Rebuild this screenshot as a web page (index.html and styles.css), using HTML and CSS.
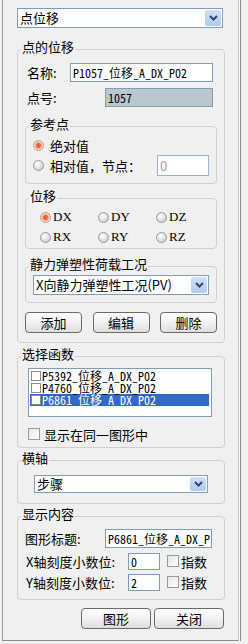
FILE: index.html
```html
<!DOCTYPE html>
<html lang="zh-CN">
<head>
    <meta charset="UTF-8">
    <meta name="viewport" content="width=device-width, initial-scale=1.0">
    <title>点位移</title>
    <link rel="stylesheet" href="styles.css">
</head>
<body>
<div class="panel">
    <div class="combo combo-top">
        <span class="combo-text">点位移</span>
        <span class="combo-btn"><svg width="9" height="6" viewBox="0 0 9 6"><path d="M1 1 L4.5 4.5 L8 1" fill="none" stroke="#33456b" stroke-width="2"/></svg></span>
    </div>

    <fieldset class="group g-point">
        <legend>点的位移</legend>
        <div class="row">
            <label class="lbl lbl-name">名称:</label>
            <div class="edit edit-name mono">P1057_位移_A_DX_P02</div>
        </div>
        <div class="row row-no">
            <label class="lbl lbl-no">点号:</label>
            <div class="edit edit-no mono">1057</div>
        </div>

        <fieldset class="group sub g-ref">
            <legend>参考点</legend>
            <div class="opt opt-1"><span class="radio on"></span><span>绝对值</span></div>
            <div class="opt opt-2"><span class="radio"></span><span>相对值，节点：</span><div class="edit edit-node">0</div></div>
        </fieldset>

        <fieldset class="group sub g-disp">
            <legend>位移</legend>
            <div class="radios">
                <div class="ropt"><span class="radio on"></span><span class="mono-s">DX</span></div>
                <div class="ropt"><span class="radio"></span><span class="mono-s">DY</span></div>
                <div class="ropt"><span class="radio"></span><span class="mono-s">DZ</span></div>
                <div class="ropt"><span class="radio"></span><span class="mono-s">RX</span></div>
                <div class="ropt"><span class="radio"></span><span class="mono-s">RY</span></div>
                <div class="ropt"><span class="radio"></span><span class="mono-s">RZ</span></div>
            </div>
        </fieldset>

        <fieldset class="group sub g-case">
            <legend>静力弹塑性荷载工况</legend>
            <div class="combo combo-case">
                <span class="combo-text">X向静力弹塑性工况(PV)</span>
                <span class="combo-btn"><svg width="9" height="6" viewBox="0 0 9 6"><path d="M1 1 L4.5 4.5 L8 1" fill="none" stroke="#33456b" stroke-width="2"/></svg></span>
            </div>
        </fieldset>

        <div class="btns">
            <button class="btn">添加</button>
            <button class="btn">编辑</button>
            <button class="btn">删除</button>
        </div>
    </fieldset>

    <fieldset class="group g-func">
        <legend>选择函数</legend>
        <div class="list">
            <div class="item mono"><span class="chk"></span>P5392_位移_A_DX_P02</div>
            <div class="item mono"><span class="chk"></span>P4760_位移_A_DX_P02</div>
            <div class="item mono selected"><span class="chk"></span>P6861_位移_A_DX_P02</div>
        </div>
        <div class="check-row"><span class="chk big"></span>显示在同一图形中</div>
    </fieldset>

    <fieldset class="group g-axis">
        <legend>横轴</legend>
        <div class="combo combo-axis">
            <span class="combo-text">步骤</span>
            <span class="combo-btn"><svg width="9" height="6" viewBox="0 0 9 6"><path d="M1 1 L4.5 4.5 L8 1" fill="none" stroke="#33456b" stroke-width="2"/></svg></span>
        </div>
    </fieldset>

    <fieldset class="group g-show">
        <legend>显示内容</legend>
        <div class="row">
            <label class="lbl lbl-title">图形标题:</label>
            <div class="edit edit-title mono">P6861_位移_A_DX_P</div>
        </div>
        <div class="row row-dec">
            <label class="lbl lbl-dec">X轴刻度小数位:</label>
            <div class="edit edit-dec mono">0</div>
            <span class="chk big"></span><span>指数</span>
        </div>
        <div class="row row-dec">
            <label class="lbl lbl-dec">Y轴刻度小数位:</label>
            <div class="edit edit-dec mono">2</div>
            <span class="chk big"></span><span>指数</span>
        </div>
    </fieldset>

    <div class="footer">
        <button class="btn btn-wide">图形</button>
        <button class="btn btn-wide">关闭</button>
    </div>
</div>
</body>
</html>
```

FILE: styles.css
```css
body {
    margin: 0;
    background: #f0f0f0;
    font-family: "Noto Sans CJK SC", "Liberation Sans", sans-serif;
    font-size: 13px;
    color: #000;
}

.panel {
    margin-left: 2px;
    width: 237px;
    height: 641px;
    box-sizing: border-box;
    padding: 8px 0 0 14px;
    border-left: 1px solid #9a9a9a;
    border-right: 1px solid #c8c8c8;
    border-bottom: 1px solid #8c8c8c;
    box-shadow: 1px 0 0 #fafafa, 2px 0 0 #8c8c8c;
}

.mono {
    font-family: "Noto Sans Mono CJK SC", "Liberation Mono", monospace;
    font-size: 12px;
}
.mono-s {
    font-family: "Liberation Serif", serif;
    font-size: 13px;
}

/* combo boxes */
.combo {
    display: flex;
    align-items: center;
    box-sizing: border-box;
    border: 1px solid #7f9db9;
    background: #fff;
    height: 20px;
}
.combo-text {
    flex: 1;
    padding-left: 2px;
    line-height: 18px;
    white-space: nowrap;
}
.combo-btn {
    width: 16px;
    align-self: stretch;
    margin: 1px;
    border-radius: 2px;
    background: linear-gradient(#cfe0f8, #aecbef);
    display: flex;
    align-items: center;
    justify-content: center;
}
.combo-top { width: 206px; }
.combo-case { width: 176px; }
.combo-axis { width: 174px; height: 18px; margin-left: 9px; }
.combo-axis .combo-text { line-height: 16px; }

/* group boxes */
.group {
    margin: 0;
    padding: 0 7px 7px;
    border: 1px solid #d0d0d0;
    border-radius: 4px;
    min-inline-size: 0;
    box-sizing: border-box;
}
.group legend {
    margin-left: -4px;
    padding: 0 1px 4px;
    line-height: 14px;
}
.g-point { width: 208px; margin-top: 12px; padding: 5px 7px 9px; }
.g-ref { margin-top: 10px; }
.g-disp { margin-top: 5px; padding-bottom: 1px; }
.g-case { margin-top: 8px; }
.g-func { width: 208px; margin-top: 4px; padding: 3px 7px 3px; }
.g-axis { width: 208px; margin-top: 3px; padding: 6px 7px 10px; }
.g-show { width: 208px; margin-top: 3px; padding: 4px 7px 8px; }

/* rows */
.row {
    display: flex;
    align-items: center;
    height: 19px;
}
.row-no { margin-top: 6px; }
.lbl { box-sizing: border-box; padding-left: 2px; }
.lbl-name { width: 45px; }
.lbl-no { width: 80px; }
.lbl-title { width: 80px; padding-left: 0; }
.lbl-dec { width: 103px; padding-left: 1px; }

.edit {
    box-sizing: border-box;
    height: 19px;
    border: 1px solid #7f9db9;
    background: #fff;
    padding-left: 2px;
    line-height: 17px;
    white-space: nowrap;
    overflow: hidden;
}
.edit-name { width: 143px; }
.edit-no { width: 108px; background: #bcc6ce; }
.edit-node { width: 52px; height: 21px; line-height: 19px; margin-left: auto; color: #a0a0a0; border-color: #9fb3c8; }
.edit-title { width: 107px; }
.edit-dec { width: 32px; height: 17px; line-height: 15px; }

.row-dec { height: 18px; margin-top: 4px; }
.row-dec + .row-dec { margin-top: 3px; }
.row-dec .chk { margin: 0 2px 0 7px; }

/* radio options */
.opt {
    display: flex;
    align-items: center;
    height: 20px;
}
.opt-2 { height: 21px; }
.opt .radio { margin-right: 6px; }

.radios {
    display: grid;
    grid-template-columns: 58px 58px 58px;
    grid-auto-rows: 20px;
    margin-left: 7px;
}
.ropt {
    display: flex;
    align-items: center;
}
.ropt .radio { margin-right: 2px; }

.radio {
    width: 11px;
    height: 11px;
    box-sizing: border-box;
    border-radius: 50%;
    border: 1px solid #9a9a9a;
    background: radial-gradient(circle at 40% 35%, #ffffff, #dcdcdc 60%, #b4b4b4);
    flex-shrink: 0;
}
.radio.on {
    border-color: #b89a8e;
    background: radial-gradient(circle at 50% 50%, #e2532a 0, #ef7a4e 2.5px, #f6cdb8 3.5px, #fbe9df 5px);
}

/* buttons */
.btns {
    display: flex;
    justify-content: space-between;
    margin-top: 9px;
}
.btn {
    width: 57px;
    height: 21px;
    padding: 0;
    border: 1px solid #6a6a6a;
    border-radius: 4px;
    background: linear-gradient(#ffffff, #f1f1f1 50%, #dedede);
    font-family: "Noto Sans CJK SC", "Liberation Sans", sans-serif;
    font-size: 13px;
    line-height: 17px;
    color: #000;
}

/* function list */
.list {
    width: 184px;
    height: 49px;
    margin-left: 3px;
    box-sizing: border-box;
    border: 1px solid #7f9db9;
    background: #fff;
    padding: 1px 2px 0 1px;
}
.item {
    display: flex;
    align-items: flex-start;
    height: 12px;
    line-height: 11px;
    white-space: nowrap;
}
.item .chk { margin-top: 1px; }
.item.selected {
    background: #316ac5;
    color: #fff;
}
.chk {
    width: 10px;
    height: 10px;
    margin: 0 1px 0 1px;
    box-sizing: border-box;
    border: 1px solid #8a8a8a;
    background: #fff;
    flex-shrink: 0;
}
.chk.big {
    width: 12px;
    height: 12px;
    border-color: #9a9a9a;
    background: linear-gradient(135deg, #e6e6e6, #ffffff);
}
.check-row {
    display: flex;
    align-items: center;
    height: 20px;
    margin: 7px 0 0 3px;
}
.check-row .chk { margin: 0 4px 0 0; }

/* footer */
.footer {
    display: flex;
    justify-content: flex-end;
    gap: 3px;
    width: 207px;
    margin-top: 8px;
}
.btn-wide { width: 70px; }
```
